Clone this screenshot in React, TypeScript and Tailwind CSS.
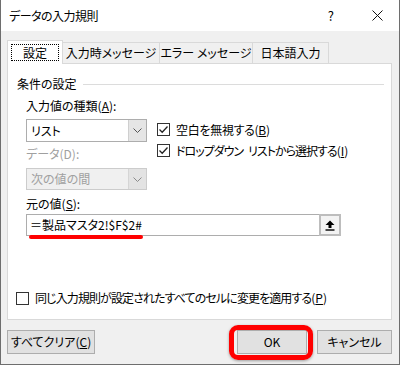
const font = "font-['Meiryo_UI','Noto_Sans_CJK_JP',sans-serif] [font-feature-settings:'palt']";

function Chevron({ color = '#555' }: { color?: string }) {
    return (
        <svg width="9" height="5" viewBox="0 0 9 5" fill="none">
            <path d="M0.5 0.5 L4.5 4.5 L8.5 0.5" stroke={color} strokeWidth="1" />
        </svg>
    );
}

function Check({ checked }: { checked: boolean }) {
    return (
        <div className="w-[13px] h-[13px] border border-[#333] bg-white flex items-center justify-center shrink-0">
            {checked && (
                <svg width="11" height="11" viewBox="0 0 11 11" fill="none">
                    <path d="M1.5 5.5 L4.2 8.2 L9.5 2.5" stroke="#222" strokeWidth="1.3" />
                </svg>
            )}
        </div>
    );
}

function Tab({ label, active, width }: { label: string; active?: boolean; width: string }) {
    if (active) {
        return (
            <div className={`${width} h-[24px] bg-white border border-[#d9d9d9] border-b-0 -mb-px relative z-10 p-[3px]`}>
                <div className="h-full border border-dotted border-black flex items-center justify-center">{label}</div>
            </div>
        );
    }
    return (
        <div className={`${width} h-[21px] bg-[#f0f0f0] border border-[#d9d9d9] border-l-0 border-b-0 flex items-center justify-center`}>
            {label}
        </div>
    );
}

function Button({ children, width }: { children: React.ReactNode; width: string }) {
    return (
        <div className={`${width} h-[24px] bg-[#e1e1e1] border border-[#adadad] flex items-center justify-center`}>{children}</div>
    );
}

export default function App() {
    return (
        <div className={`w-[400px] h-[365px] bg-[#f0f0f0] border-x border-b border-[#6e6e6e] flex flex-col text-[12px] text-black ${font}`}>
            {/* title bar */}
            <div className="h-[31px] bg-white flex items-center shrink-0">
                <span className="pl-[8px] tracking-[-0.5px]">データの入力規則</span>
                <span className="ml-auto mr-[38px] text-[13px]">?</span>
                <svg className="mr-[16px]" width="11" height="11" viewBox="0 0 11 11">
                    <path d="M0.5 0.5 L10.5 10.5 M10.5 0.5 L0.5 10.5" stroke="#111" strokeWidth="1" />
                </svg>
            </div>

            <div className="flex-1 flex flex-col pl-[6px] pr-[7px] pt-[9px]">
                {/* tabs */}
                <div className="flex items-end">
                    <Tab label="設定" active width="w-[56px]" />
                    <Tab label="入力時メッセージ" width="w-[97px]" />
                    <Tab label="エラー メッセージ" width="w-[93px]" />
                    <Tab label="日本語入力" width="w-[76px]" />
                </div>

                {/* panel */}
                <div className="h-[257px] bg-white border border-[#d9d9d9] flex flex-col pt-[11px] pb-[12px]">
                    <div className="flex items-center pl-[9px] pr-[7px]">
                        <span>条件の設定</span>
                        <div className="flex-1 h-px bg-[#dcdcdc] ml-[6px]" />
                    </div>

                    <div className="pl-[18px] mt-[5px] flex gap-[10px]">
                        <div className="w-[121px] flex flex-col">
                            <span className="h-[16px] leading-[16px]">入力値の種類(<span className="underline">A</span>):</span>
                            <div className="mt-[5px] h-[23px] border border-[#adadad] bg-white flex">
                                <span className="flex-1 flex items-center pl-[4px]">リスト</span>
                                <div className="w-[18px] bg-[#e5e5e5] border-l border-[#cfcfcf] flex items-center justify-center">
                                    <Chevron />
                                </div>
                            </div>
                            <span className="mt-[4px] h-[16px] leading-[16px] text-[#a0a0a0]">データ(D):</span>
                            <div className="mt-[6px] h-[22px] border border-[#cccccc] bg-[#f0f0f0] flex text-[#a0a0a0]">
                                <span className="flex-1 flex items-center pl-[4px]">次の値の間</span>
                                <div className="w-[18px] bg-[#e3e3e3] border-l border-[#d5d5d5] flex items-center justify-center">
                                    <Chevron color="#8a8a8a" />
                                </div>
                            </div>
                        </div>
                        <div className="flex flex-col pt-[25px] gap-[8px]">
                            <div className="flex items-center gap-[6px] h-[13px]">
                                <Check checked />
                                <span className="tracking-[-0.3px]">空白を無視する(<span className="underline">B</span>)</span>
                            </div>
                            <div className="flex items-center gap-[6px] h-[13px]">
                                <Check checked />
                                <span className="tracking-[-1px]">
                                    ドロップダウン<span className="inline-block w-[5px]" />リストから選択する
                                    <span className="tracking-normal">(<span className="underline">I</span>)</span>
                                </span>
                            </div>
                        </div>
                    </div>

                    <div className="pl-[18px] mt-[6px] flex flex-col">
                        <span className="h-[16px] leading-[16px]">元の値(<span className="underline">S</span>):</span>
                        <div className="relative mt-[2px] w-[315px] h-[22px] border border-[#adadad] bg-white flex">
                            <span className="flex-1 flex items-center pl-[3px]">＝製品マスタ2!$F$2#</span>
                            <div className="w-[22px] -my-px -mr-px border-2 border-[#bdbdbd] bg-[#f3f3f3] flex items-center justify-center">
                                <svg width="10" height="11" viewBox="0 0 10 11">
                                    <path d="M5 0.5 L9.5 5 L6.5 5 L6.5 8 L3.5 8 L3.5 5 L0.5 5 Z" fill="#000" />
                                    <rect x="0.5" y="9.3" width="9" height="1.4" fill="#000" />
                                </svg>
                            </div>
                            <div className="absolute left-[2px] bottom-[-4px] w-[114px] h-[4px] rounded-full bg-[#ff0000]" />
                        </div>
                    </div>

                    <div className="mt-auto pl-[8px] flex items-center gap-[6px]">
                        <Check checked={false} />
                        <span className="tracking-[-0.9px]">同じ入力規則が設定されたすべてのセルに変更を適用する<span className="tracking-normal">(<span className="underline">P</span>)</span></span>
                    </div>
                </div>

                {/* buttons */}
                <div className="mt-[10px] flex items-center">
                    <Button width="w-[88px]">すべてクリア(<span className="underline">C</span>)</Button>
                    <div className="ml-auto relative">
                        <Button width="w-[70px]">OK</Button>
                        <div className="absolute -left-[8px] -right-[6px] -top-[5px] -bottom-[6px] border-[5px] border-[#ff0000] rounded-[9px] shadow-[0_1px_3px_rgba(0,0,0,0.35)]" />
                    </div>
                    <div className="ml-[10px]">
                        <Button width="w-[75px]">キャンセル</Button>
                    </div>
                </div>
            </div>
        </div>
    );
}
